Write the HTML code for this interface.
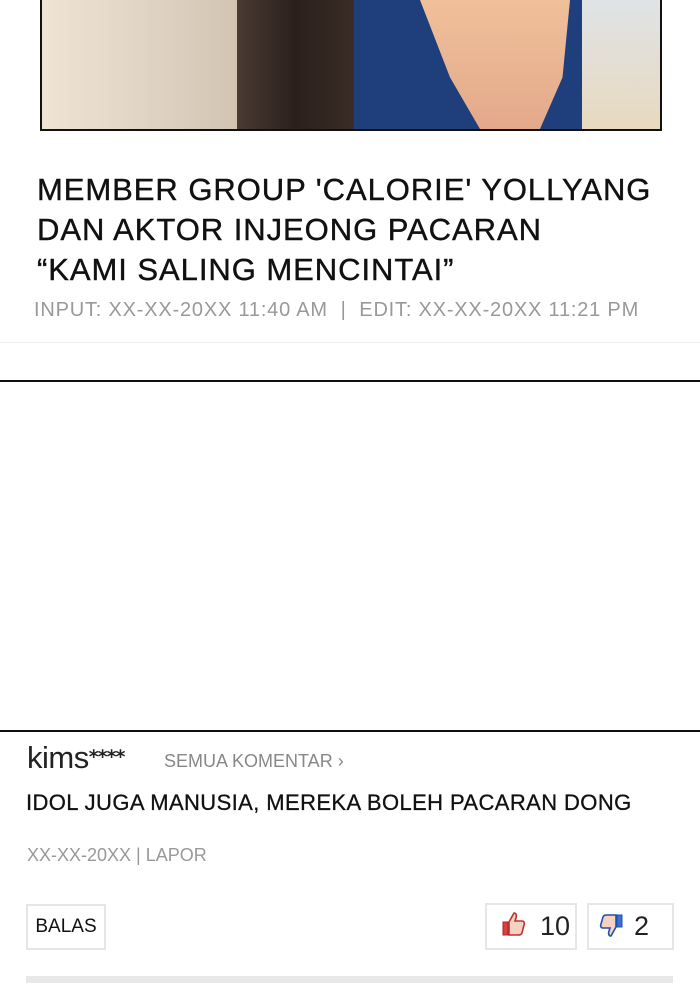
<!DOCTYPE html>
<html><head><meta charset="utf-8"><style>
body{margin:0;width:700px;height:1000px;background:#fff;position:relative;overflow:hidden;font-family:"Liberation Sans",sans-serif;}
.a{position:absolute}
</style></head><body>
<div class="a" style="left:40px;top:-2px;width:618px;height:129px;border:2px solid #111;overflow:hidden;background:#e8ddcf">
 <div class="a" style="left:0;top:0;width:250px;height:129px;background:linear-gradient(90deg,#efe4d4,#d9ccbb 60%,#cbbba6)"></div>
 <div class="a" style="left:195px;top:0;width:117px;height:129px;background:linear-gradient(90deg,#4a3a32,#2b201c 50%,#3a2c26)"></div>
 <div class="a" style="left:312px;top:0;width:306px;height:129px;background:#1e3f7c"></div>
 <div class="a" style="left:378px;top:0;width:150px;height:129px;background:linear-gradient(180deg,#f0c09a,#e3a98a);clip-path:polygon(0 0,100% 0,95% 60%,80% 100%,40% 100%,20% 60%)"></div>
 <div class="a" style="left:540px;top:0;width:78px;height:129px;background:linear-gradient(180deg,#dfe3e6,#e8d9bf)"></div>
</div>
<div class="a" style="left:37px;top:170px;font-size:31px;line-height:40px;color:#111;letter-spacing:0.95px;-webkit-text-stroke:0.4px #111">MEMBER GROUP 'CALORIE' YOLLYANG<br>DAN AKTOR INJEONG PACARAN<br>“KAMI SALING MENCINTAI”</div>
<div class="a" style="left:34px;top:299px;font-size:20px;color:#999;letter-spacing:0.8px">INPUT: XX-XX-20XX 11:40 AM &nbsp;|&nbsp; EDIT: XX-XX-20XX 11:21 PM</div>
<div class="a" style="left:0;top:342px;width:700px;height:1px;background:#eee"></div>
<div class="a" style="left:0;top:380px;width:700px;height:2px;background:#111"></div>
<div class="a" style="left:0;top:730px;width:700px;height:2px;background:#111"></div>
<div class="a" style="left:27px;top:740px;font-size:31px;color:#222;letter-spacing:-0.5px">kims<span style="font-family:'DejaVu Sans',sans-serif;font-size:19px;font-weight:bold;vertical-align:5px;letter-spacing:-1px">****</span></div>
<div class="a" style="left:164px;top:751px;font-size:18px;color:#888">SEMUA KOMENTAR ›</div>
<div class="a" style="left:26px;top:790px;font-size:22px;color:#111;letter-spacing:0.4px;-webkit-text-stroke:0.3px #111">IDOL JUGA MANUSIA, MEREKA BOLEH PACARAN DONG</div>
<div class="a" style="left:27px;top:845px;font-size:18px;color:#999">XX-XX-20XX | LAPOR</div>
<div class="a" style="left:26px;top:904px;width:80px;height:46px;border:2px solid #e6e6e6;box-sizing:border-box;font-size:19px;line-height:42px;text-align:center;color:#111">BALAS</div>
<div class="a" style="left:485px;top:903px;width:92px;height:47px;border:2px solid #e6e6e6;box-sizing:border-box;font-size:27px;line-height:43px;color:#222;padding-left:53px;">10</div>
<svg class="a" style="left:501px;top:911px" width="26" height="26" viewBox="0 0 26 26"><path d="M2 11h5v13H2z" fill="#d94040" stroke="#b02020"/><path d="M8 11l5-9c2 0 3 2 2 5l-1 3h7c2 0 3 2 2 4l-2 8c-1 2-2 2-4 2H8z" fill="#f5d2c2" stroke="#c03030" stroke-width="1.6"/></svg>
<div class="a" style="left:587px;top:903px;width:87px;height:47px;border:2px solid #e6e6e6;box-sizing:border-box;font-size:27px;line-height:43px;color:#222;padding-left:45px;">2</div>
<svg class="a" style="left:598px;top:913px" width="26" height="26" viewBox="0 0 26 26"><path d="M19 2h5v12h-5z" fill="#3c6fd0" stroke="#2050b0"/><path d="M18 14l-5 9c-2 0-3-2-2-5l1-3H5c-2 0-3-2-2-4l2-7c1-2 2-2 4-2h9z" fill="#f5d2c2" stroke="#2050b0" stroke-width="1.6"/></svg>
<div class="a" style="left:26px;top:976px;width:647px;height:7px;background:#e8e8e8"></div>
</body></html>
